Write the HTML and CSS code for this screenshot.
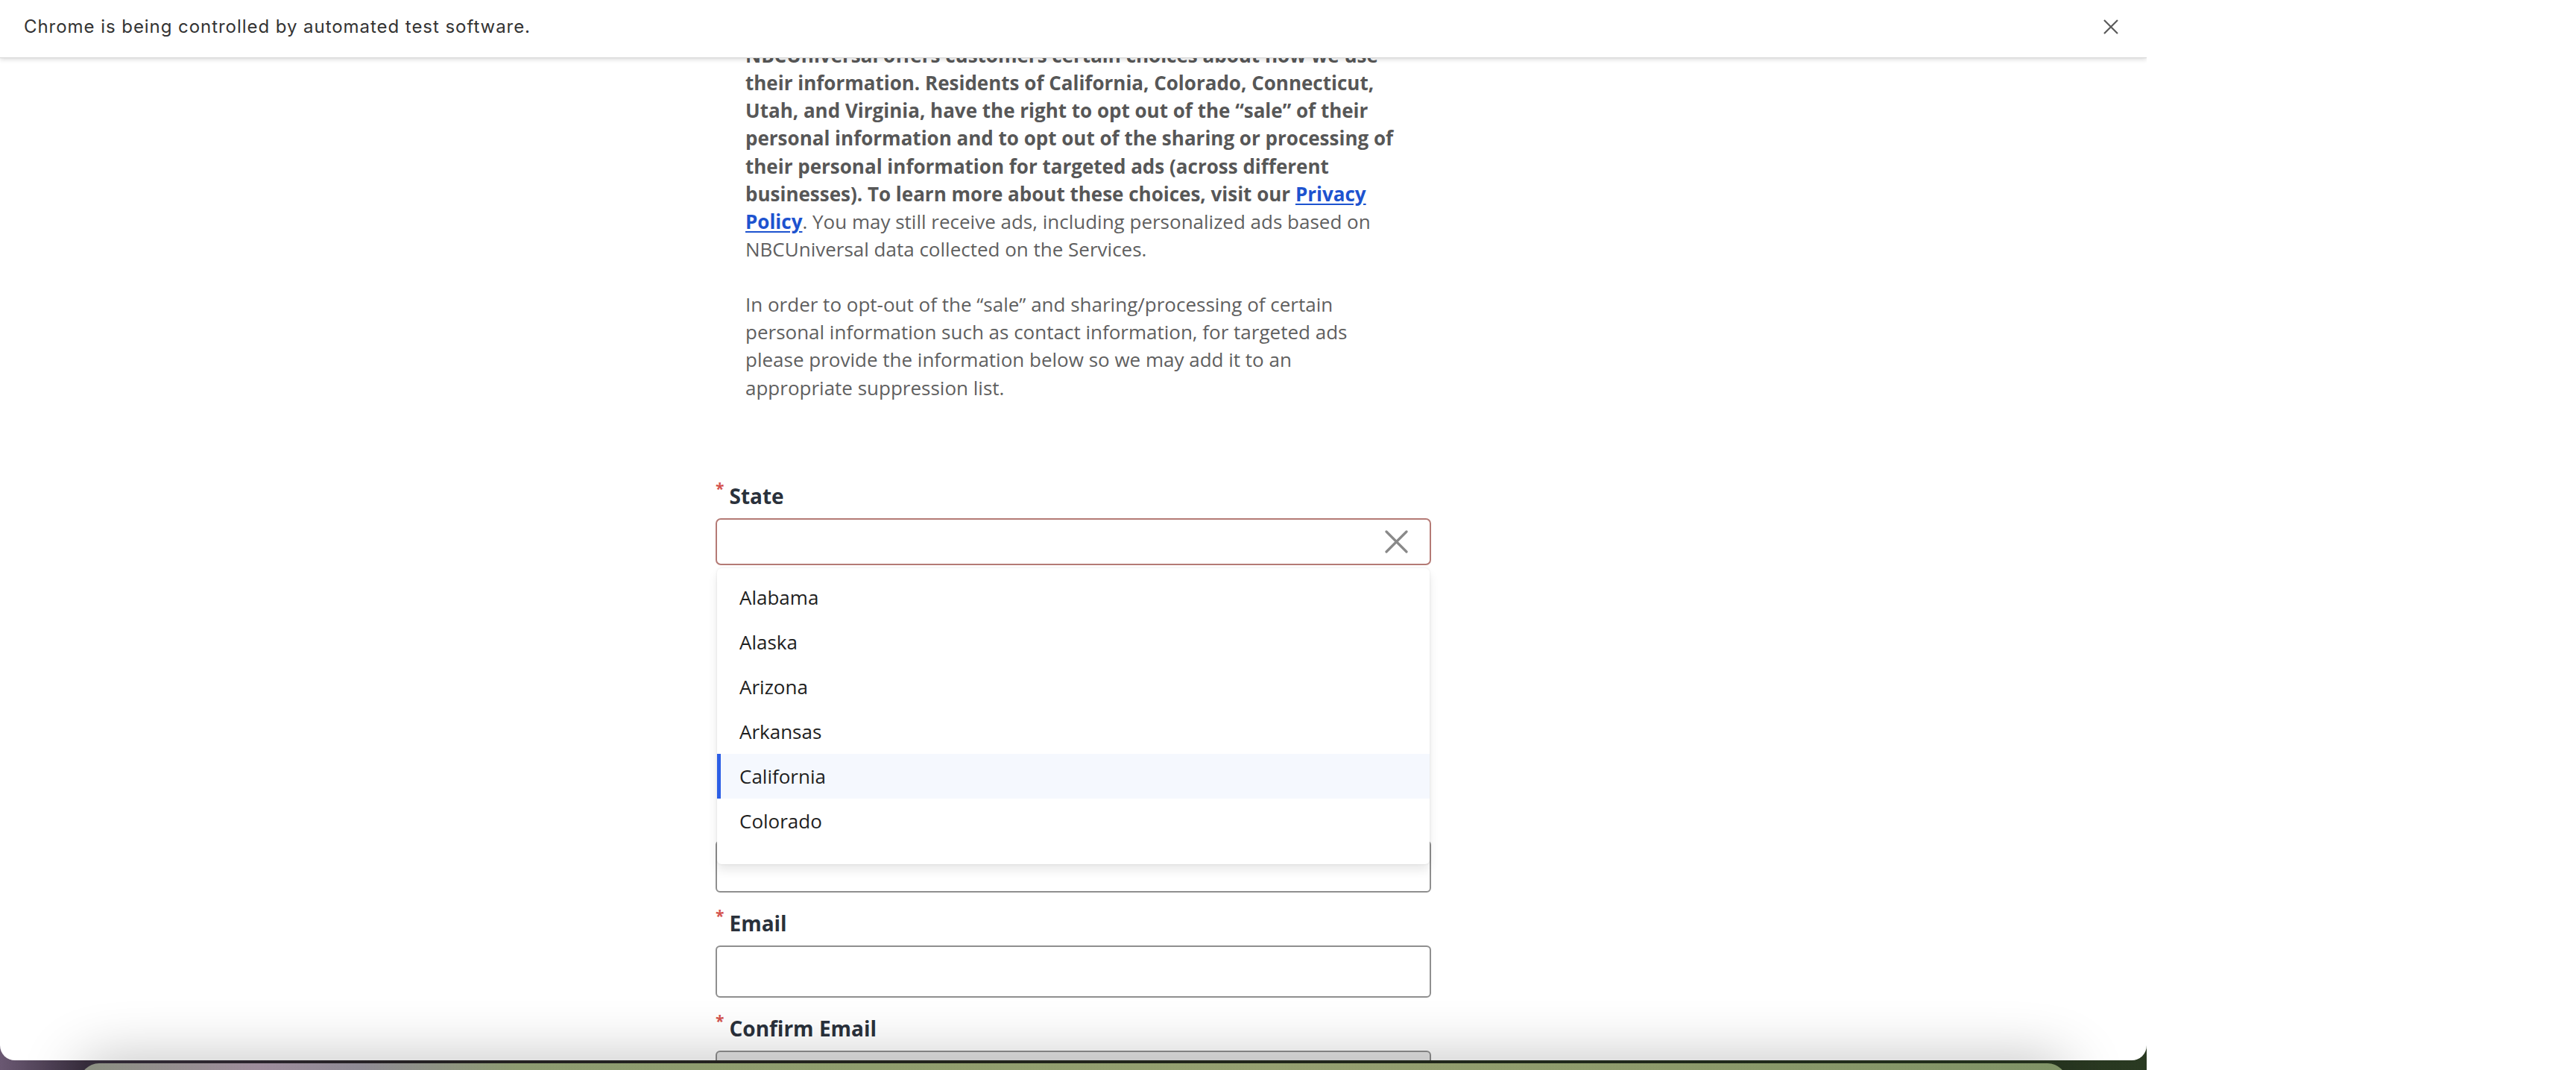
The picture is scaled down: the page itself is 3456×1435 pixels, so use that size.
FILE: index.html
```html
<!DOCTYPE html>
<html lang="en">
<head>
<meta charset="utf-8">
<title>Opt-out request</title>
<link rel="stylesheet" href="styles.css">
</head>
<body>
<div class="desktop">
  <div class="window">
    <div class="infobar">
      <span class="infobar-text">Chrome is being controlled by automated test software.</span>
      <span class="infobar-close" aria-label="Close">
        <svg width="22" height="20" viewBox="0 0 22 20"><path d="M2 1 L20 19 M20 1 L2 19" stroke="#5a5a5a" stroke-width="2.2" fill="none"/></svg>
      </span>
    </div>
    <main class="page">
      <div class="intro">
        <p class="intro-p"><strong>NBCUniversal offers customers certain choices about how we use their information. Residents of California, Colorado, Connecticut, Utah, and Virginia, have the right to opt out of the “sale” of their personal information and to opt out of the sharing or processing of their personal information for targeted ads (across different businesses). To learn more about these choices, visit our <a class="link" href="#">Privacy Policy</a></strong>. You may still receive ads, including personalized ads based on NBCUniversal data collected on the Services.</p>
        <p class="intro-p">In order to opt-out of the “sale” and sharing/processing of certain personal information such as contact information, for targeted ads please provide the information below so we may add it to an appropriate suppression list.</p>
      </div>
      <form class="form">
        <div class="field field-state">
          <label class="label"><span class="req">*</span>State</label>
          <div class="select">
            <svg class="clear" width="31" height="31" viewBox="0 0 31 31"><path d="M2 2 L29 29 M29 2 L2 29" stroke="#898989" stroke-width="3.2" stroke-linecap="round" fill="none"/></svg>
          </div>
          <ul class="dropdown">
            <li class="option">Alabama</li>
            <li class="option">Alaska</li>
            <li class="option">Arizona</li>
            <li class="option">Arkansas</li>
            <li class="option option-active">California</li>
            <li class="option">Colorado</li>
          </ul>
        </div>
        <div class="field field-covered">
          <input class="input" type="text">
        </div>
        <div class="field">
          <label class="label"><span class="req">*</span>Email</label>
          <input class="input" type="text">
        </div>
        <div class="field">
          <label class="label"><span class="req">*</span>Confirm Email</label>
          <input class="input input-disabled" type="text" disabled>
        </div>
      </form>
    </main>
  </div>
  <div class="dock"></div>
</div>
</body>
</html>
```
FILE: styles.css
```css
* { box-sizing: border-box; }

html, body {
  margin: 0;
  padding: 0;
  background: #ffffff;
}

body {
  width: 3456px;
  height: 1435px;
  overflow: hidden;
}

.desktop {
  position: relative;
  width: 2880px;
  height: 1435px;
  overflow: hidden;
  background: linear-gradient(90deg, #6a5872 0%, #3a3040 4%, #2a2628 20%, #262a1f 50%, #24301f 80%, #2a3a22 100%);
}

.window {
  position: relative;
  z-index: 1;
  width: 2880px;
  height: 1422px;
  background: #ffffff;
  border-radius: 0 0 20px 20px;
  overflow: hidden;
}

/* Chrome automation infobar (overlays the scrolled page) */
.infobar {
  position: absolute;
  top: 0;
  left: 0;
  right: 0;
  z-index: 5;
  height: 78px;
  display: flex;
  align-items: center;
  justify-content: space-between;
  padding: 0 37px 6px 32px;
  background: #ffffff;
  border-bottom: 1px solid #d4d4d4;
  box-shadow: 0 2px 6px rgba(0, 0, 0, 0.14);
}

.infobar-text {
  font-family: Inter, "Liberation Sans", sans-serif;
  font-size: 24px;
  color: #333333;
  letter-spacing: 0.95px;
}

.infobar-close {
  display: flex;
  width: 22px;
  height: 20px;
}

/* Page */
.page {
  width: 960px;
  margin: 0 auto;
  padding-top: 56px;
  font-family: "Open Sans", "Liberation Sans", sans-serif;
}

.intro {
  padding: 0 48px 0 40px;
}

.intro-p {
  margin: 0 0 37px;
  font-size: 26px;
  line-height: 1.42857;
  color: #5f5f5f;
}

.intro-p:last-child {
  margin-bottom: 0;
}

.intro-p strong {
  font-weight: 700;
  color: #575757;
}

.link {
  color: #1d53cf;
  text-decoration: underline;
  text-underline-offset: 3px;
}

.form {
  margin-top: 106px;
  display: flex;
  flex-direction: column;
}

.field {
  display: flex;
  flex-direction: column;
  margin-bottom: 21px;
}

.label {
  font-size: 28px;
  line-height: 40px;
  font-weight: 700;
  color: #2a313b;
  margin-bottom: 10px;
}

.req {
  display: inline-block;
  vertical-align: top;
  font-size: 21px;
  line-height: 20px;
  font-weight: 700;
  color: #d4534e;
  margin-right: 7px;
}

.input {
  display: block;
  width: 960px;
  height: 70px;
  margin: 0;
  border: 2px solid #8f8f8f;
  border-radius: 6px;
  background: #ffffff;
  font-family: inherit;
  font-size: 26px;
}

.input-disabled {
  background: #e6e6e6;
}

/* State combobox */
.field-state {
  position: relative;
}

.select {
  height: 63px;
  border: 2px solid #b47a75;
  border-radius: 7px;
  background: #ffffff;
  display: flex;
  align-items: center;
  justify-content: flex-end;
  padding-right: 29px;
}

.clear {
  display: block;
}

.field-covered {
  margin-top: 348px;
}

.dropdown {
  position: absolute;
  z-index: 3;
  left: 2px;
  right: 2px;
  top: 117px;
  margin: 0;
  padding: 9px 0 28px;
  list-style: none;
  background: #ffffff;
  border-radius: 6px;
  box-shadow: 0 0 3px rgba(0, 0, 0, 0.10), 0 8px 14px rgba(0, 0, 0, 0.09);
}

.option {
  height: 60px;
  display: flex;
  align-items: center;
  padding-left: 25px;
  font-size: 26px;
  color: #1e1e1e;
  border-left: 5px solid transparent;
}

.option-active {
  background: #f5f8fe;
  border-left-color: #2d5fe6;
}

/* macOS dock edge peeking below the window */
.dock {
  position: absolute;
  z-index: 2;
  left: 107px;
  top: 1426px;
  width: 2666px;
  height: 60px;
  border-radius: 26px 26px 0 0;
  background: linear-gradient(90deg, #8a8f80 0%, #9e8c9c 9%, #8f8a95 14%, #8d9b70 22%, #8f9d6c 40%, #95a070 60%, #8c9a6a 80%, #7f9366 100%);
  box-shadow: 0 0 80px rgba(0, 0, 0, 0.30);
}
```
